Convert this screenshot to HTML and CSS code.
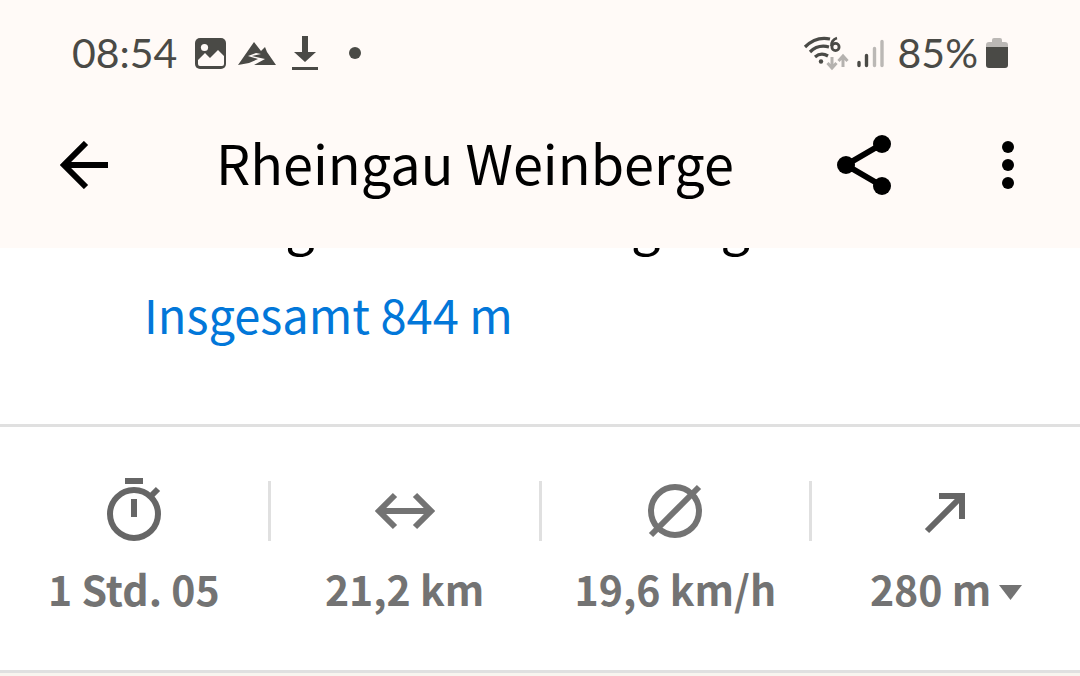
FILE: index.html
```html
<!DOCTYPE html>
<html lang="de">
<head>
<meta charset="utf-8">
<meta name="viewport" content="width=device-width, initial-scale=1">
<title>Rheingau Weinberge</title>
<link rel="stylesheet" href="styles.css">
</head>
<body>
<header class="header">
  <div class="status">
    <div class="status-group">
      <span class="clock">08:54</span>
      <svg width="130" height="40" viewBox="0 0 130 40" aria-hidden="true">
        <rect x="1" y="5" width="31" height="31" rx="5" fill="#4a4a46"/>
        <circle cx="10.500" cy="14.500" r="3.600" fill="#fffaf7"/>
        <path fill="#fffaf7" d="M4 27l7-7 5 5 8-8 6 6v8q0 2-2 2H6q-2 0-2-2z"/>
        <path fill="#4a4a46" d="M44 32l16-23 7 9 4-4 2 5 9 13H60l11-6-13-3 9-2-5-1-8 3 10 3-9 4z"/>
        <path fill="#4a4a46" d="M108 3h6v16h8l-11 10-11-10h8zM98 34h26v3H98z"/>
      </svg>
      <span class="dot"></span>
    </div>
    <div class="status-group">
      <svg width="84" height="40" viewBox="0 0 84 40" aria-hidden="true">
        <g fill="none" stroke="#4a4a46" stroke-width="3.200">
          <path d="M2 14Q13 3 27 6"/><path d="M7 19Q15 11 26 14"/><path d="M12 24q6-5 13-1"/>
          <path stroke-width="2.800" d="M34 5c-4 1-6 5-5.500 8"/><circle cx="32.500" cy="14" r="3.600" stroke-width="2.800"/>
        </g>
        <circle cx="18" cy="28.500" r="2.200" fill="#4a4a46"/>
        <path fill="none" stroke="#b5b2af" stroke-width="3" d="M29 24v11m-4.500-5l4.500 5 4.500-5M40 34V23m-4.500 5l4.500-5 4.500 5"/>
        <g stroke-width="3.400" stroke-linecap="round"><path stroke="#4a4a46" d="M56 29.500v3M63.500 22.500v10"/><path stroke="#bbb8b5" d="M71.500 15.500v17M79 8.500v24"/></g>
      </svg>
      <span class="battery-level">85%</span>
      <svg width="22" height="40" viewBox="0 0 22 40" aria-hidden="true">
        <path fill="#bbb8b5" d="M6 7q0-2 2-2h6q2 0 2 2v2h3q3 0 3 3v4H0v-4q0-3 3-3h3z"/>
        <path fill="#4a4a46" d="M0 14h22v18q0 3-3 3H3q-3 0-3-3z"/>
      </svg>
    </div>
  </div>
  <nav class="bar">
    <button class="icon-button" type="button" aria-label="Zurück">
      <svg width="48" height="48" viewBox="0 0 48 48"><path fill="none" stroke="#000" stroke-width="6" d="M48 24H5M26 2L4 24l22 22"/></svg>
    </button>
    <h1 class="title">Rheingau Weinberge</h1>
    <button class="icon-button" type="button" aria-label="Teilen">
      <svg width="54" height="60" viewBox="0 0 54 60"><path fill="none" stroke="#000" stroke-width="6" d="M45 9L9 30l36 21"/><circle cx="45" cy="9" r="9"/><circle cx="9" cy="30" r="9"/><circle cx="45" cy="51" r="9"/></svg>
    </button>
    <button class="icon-button more" type="button" aria-label="Mehr">
      <svg width="12" height="48" viewBox="0 0 12 48"><circle cx="6" cy="6" r="6"/><circle cx="6" cy="24" r="6"/><circle cx="6" cy="42" r="6"/></svg>
    </button>
  </nav>
</header>
<main>
  <section class="notice">
    <h2 class="notice-title">Bedingt freier Durchgang</h2>
    <a class="notice-link" href="#">Insgesamt 844 m</a>
  </section>
  <section class="stats">
    <div class="stat">
      <svg width="60" height="66" viewBox="0 0 60 66" aria-hidden="true"><g fill="none" stroke="#666" stroke-width="6"><circle cx="30" cy="38" r="24"/><path d="M21 5h18M30 23v18M46 21l8-8"/></g></svg>
      <span>1 Std. 05</span>
    </div>
    <div class="stat">
      <svg width="60" height="66" viewBox="0 0 60 66" aria-hidden="true"><path fill="none" stroke="#737373" stroke-width="6" d="M5 35h50M20 19L4 35l16 16M40 19l16 16-16 16"/></svg>
      <span>21,2 km</span>
    </div>
    <div class="stat">
      <svg width="60" height="66" viewBox="0 0 60 66" aria-hidden="true"><g fill="none" stroke="#737373" stroke-width="6"><circle cx="30" cy="35" r="24"/><path d="M6 59l48-48"/></g></svg>
      <span>19,6 km/h</span>
    </div>
    <button class="stat" type="button">
      <svg width="60" height="66" viewBox="0 0 60 66" aria-hidden="true"><path fill="none" stroke="#666" stroke-width="6" d="M11 55l36-36M23 20h23v23"/></svg>
      <span class="climb">280 m<svg width="23" height="15" viewBox="0 0 23 15" aria-hidden="true"><path fill="#737373" d="M0 0h23L11.500 15z"/></svg></span>
    </button>
  </section>
</main>
</body>
</html>
```
FILE: styles.css
```css
* { box-sizing: border-box; }

body {
  margin: 0;
  min-height: 100vh;
  background: #f8f5ef;
  color: #000;
  font-family: "Noto Sans CJK SC", "Noto Sans", sans-serif;
}

svg { display: block; flex: none; }

button {
  margin: 0;
  padding: 0;
  border: 0;
  background: none;
  color: inherit;
  font: inherit;
}

.header { height: 248px; background: #fffaf7; }

.status {
  display: flex;
  justify-content: space-between;
  padding: 33px 72px 0 72px;
  color: #4a4a46;
  font: 41px/40px Lato, sans-serif;
}

.status-group { display: flex; align-items: center; }
.clock { width: 122px; }
.dot { width: 12px; height: 12px; margin-left: 25px; border-radius: 50%; background: #4a4a46; }
.battery-level { margin: 0 8px 0 11px; }

.bar {
  display: flex;
  align-items: center;
  height: 80px;
  margin-top: 52px;
  padding: 0 66px 0 60px;
}

.title {
  flex: 1;
  margin: 0 0 0 108px;
  font-size: 54px;
  font-weight: 400;
  line-height: 72px;
  padding-bottom: 6px;
  white-space: nowrap;
}

.more { margin-left: 111px; }

.notice {
  height: 176px;
  overflow: hidden;
  padding-left: 144px;
  background: #fff;
}

.notice-title {
  margin: -46px 0 0;
  font-size: 52px;
  font-weight: 400;
  line-height: 40px;
  white-space: nowrap;
}

.notice-link {
  display: block;
  margin-top: 36px;
  color: #0277d9;
  font-size: 47px;
  line-height: 72px;
  text-decoration: none;
}

.stats {
  display: flex;
  height: 249px;
  border-top: 3px solid #e0e0e0;
  border-bottom: 3px solid #e0e0e0;
  background: #fff;
}

.stat {
  flex: 1;
  display: flex;
  flex-direction: column;
  align-items: center;
  padding-top: 49px;
  color: #737373;
  font-size: 41px;
  font-weight: 700;
  line-height: 60px;
  white-space: nowrap;
}

.stat span { margin-top: 16px; }

.stat + .stat {
  padding-left: 3px;
  background: linear-gradient(#e0e0e0, #e0e0e0) 0 54px / 3px 60px no-repeat;
}

.stat .climb { display: flex; align-items: center; gap: 8px; }
.climb svg { margin-top: 8px; }
```
